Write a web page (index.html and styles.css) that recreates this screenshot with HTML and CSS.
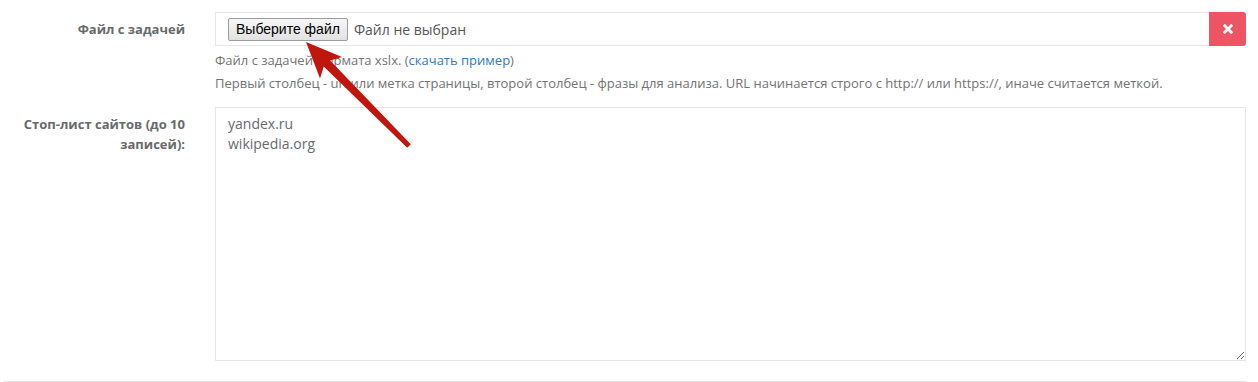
FILE: index.html
```html
<!DOCTYPE html>
<html lang="ru">
<head>
<meta charset="utf-8">
<title>Форма</title>
<link rel="stylesheet" href="styles.css">
</head>
<body>
<div class="page">
  <form class="form">
    <div class="group">
      <label class="label">Файл с задачей</label>
      <div class="field">
        <div class="input-group">
          <div class="file-input">
            <span class="file-btn">Выберите файл</span>
            <span class="file-name">Файл не выбран</span>
          </div>
          <span class="clear-btn">
            <svg width="10" height="10" viewBox="0 0 10 10"><path d="M1.8 1.8 L8.2 8.2 M8.2 1.8 L1.8 8.2" stroke="#fff" stroke-width="2.8" stroke-linecap="square"/></svg>
          </span>
        </div>
        <p class="help">Файл с задачей формата xslx. (<a href="#" class="link">скачать пример</a>)</p>
        <p class="help">Первый столбец - url или метка страницы, второй столбец - фразы для анализа. URL начинается строго с http:// или https://, иначе считается меткой.</p>
      </div>
    </div>
    <div class="group">
      <label class="label">Стоп-лист сайтов (до 10 записей):</label>
      <div class="field">
        <textarea class="textarea">yandex.ru
wikipedia.org</textarea>
      </div>
    </div>
    <div class="divider"></div>
  </form>
  <svg class="arrow" width="1258" height="382" viewBox="0 0 1258 382">
    <polygon fill="#c0160d" points="306,42 342,57 330.1,60.4 410.8,144.2 407.2,147.8 323.7,66.6 320,78.5"/>
  </svg>
</div>
</body>
</html>
```

FILE: styles.css
```css
html, body {
  margin: 0;
  padding: 0;
  background: #ffffff;
}

.page {
  position: relative;
  width: 1258px;
  height: 382px;
  overflow: hidden;
}

.form {
  padding: 12px 12px 0 3px;
  font-family: "Open Sans", sans-serif;
  color: #676a6c;
}

.group {
  display: grid;
  grid-template-columns: 212px 1fr;
  margin-bottom: 15px;
}

.label {
  padding: 7px 30px 0 0;
  text-align: right;
  font-size: 13px;
  font-weight: 700;
  line-height: 20px;
  color: #676a6c;
}

.field {
  min-width: 0;
}

.input-group {
  display: flex;
  height: 34px;
}

.file-input {
  flex: 1;
  display: flex;
  align-items: center;
  gap: 6px;
  border: 1px solid #e5e6e7;
  border-right: none;
  padding: 0 12px;
}

.file-btn {
  display: inline-block;
  box-sizing: border-box;
  height: 23px;
  padding: 0 7px;
  line-height: 21px;
  font-family: "Liberation Sans", Arial, sans-serif;
  font-size: 14px;
  color: #000;
  background: linear-gradient(#f6f6f6, #e2e2e2);
  border: 1px solid #9c9c9c;
  border-radius: 2px;
}

.file-name {
  font-size: 14px;
  color: #555;
}

.clear-btn {
  width: 37px;
  display: flex;
  align-items: center;
  justify-content: center;
  background: #ed5565;
  border-radius: 0 3px 3px 0;
}

.help {
  margin: 5px 0 0;
  font-size: 13px;
  line-height: 18px;
  color: #737373;
}

.link {
  color: #337ab7;
  text-decoration: none;
}

.textarea {
  display: block;
  box-sizing: border-box;
  width: 100%;
  height: 254px;
  margin: 0;
  padding: 6px 12px;
  border: 1px solid #e5e6e7;
  border-radius: 0;
  font-family: "Open Sans", sans-serif;
  font-size: 14px;
  line-height: 20px;
  color: #676a6c;
  resize: vertical;
  outline: none;
}

.divider {
  margin-top: 20px;
  border-top: 1px solid #e7eaec;
}

.arrow {
  position: absolute;
  left: 0;
  top: 0;
  pointer-events: none;
}
```
